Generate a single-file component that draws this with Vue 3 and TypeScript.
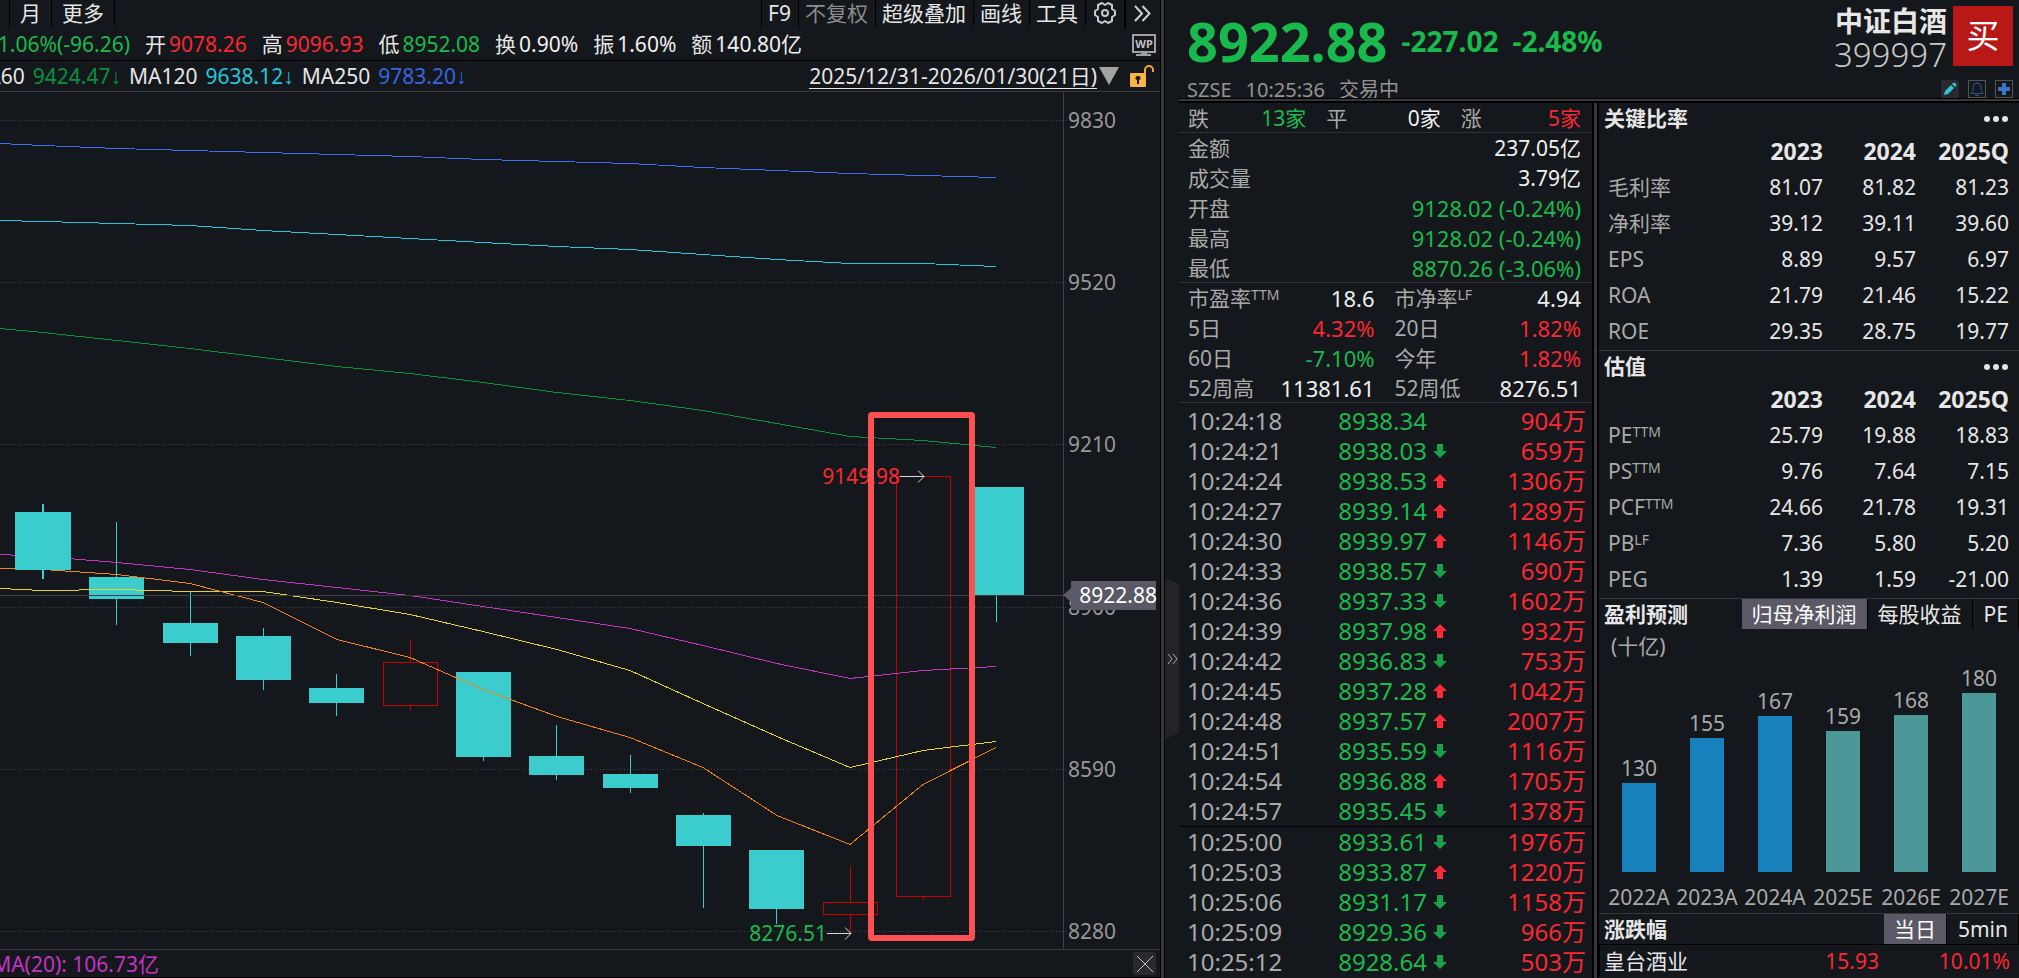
<script setup lang="ts">
import { ref } from 'vue'

type Tone = 'up' | 'down' | 'plain'

interface Quote { label: string; value: string; tone: Tone }
interface Average { name: string; value: string; cls: string }
interface Candle { x: number; open: number; close: number; high: number; low: number; rise?: boolean }
interface Line { cls: string; ys: number[] }
interface Tick { time: string; price: string; dir: '' | 'up' | 'down'; vol: string }
interface Ratio { label: string; sup?: string; values: string[] }

const tools = ['F9', '不复权', '超级叠加', '画线', '工具']

const quotes: Quote[] = [
  { label: '开', value: '9078.26', tone: 'up' },
  { label: '高', value: '9096.93', tone: 'up' },
  { label: '低', value: '8952.08', tone: 'down' },
  { label: '换', value: '0.90%', tone: 'plain' },
  { label: '振', value: '1.60%', tone: 'plain' },
  { label: '额', value: '140.80亿', tone: 'plain' },
]

const averages: Average[] = [
  { name: 'MA60', value: '9424.47↓', cls: 'c60' },
  { name: 'MA120', value: '9638.12↓', cls: 'c120' },
  { name: 'MA250', value: '9783.20↓', cls: 'c250' },
]

const axis = [
  { label: '9830', y: 28 },
  { label: '9520', y: 190 },
  { label: '9210', y: 352 },
  { label: '8900', y: 515 },
  { label: '8590', y: 677 },
  { label: '8280', y: 839 },
]

const candles: Candle[] = [
  { x: 89, open: 485, close: 507, high: 430, low: 533 },
  { x: 163, open: 531, close: 551, high: 500, low: 564 },
  { x: 236, open: 544, close: 588, high: 536, low: 598 },
  { x: 309, open: 596, close: 611, high: 582, low: 624 },
  { x: 383, open: 570, close: 614, high: 547, low: 619, rise: true },
  { x: 456, open: 580, close: 665, high: 580, low: 669 },
  { x: 529, open: 664, close: 683, high: 633, low: 688 },
  { x: 603, open: 682, close: 696, high: 663, low: 701 },
  { x: 676, open: 723, close: 754, high: 721, low: 816 },
  { x: 749, open: 758, close: 817, high: 758, low: 832 },
  { x: 823, open: 810, close: 823, high: 774, low: 841, rise: true },
  { x: 896, open: 384, close: 805, high: 384, low: 808, rise: true },
  { x: 969, open: 395, close: 503, high: 395, low: 530 },
]

const stops = [0, 43, 117, 190, 263, 337, 410, 483, 557, 630, 703, 777, 850, 923, 996]
const lines: Line[] = [
  { cls: 'm250', ys: [51, 53, 56, 58, 60, 62, 64, 67, 69, 71, 75, 78, 81, 83, 85] },
  { cls: 'm120', ys: [128, 129, 131, 133, 138, 142, 146, 150, 154, 157, 162, 167, 171, 171, 174] },
  { cls: 'm60', ys: [236, 240, 248, 256, 265, 274, 281, 290, 300, 308, 318, 331, 344, 348, 355] },
  { cls: 'm20', ys: [462, 464, 470, 477, 487, 495, 503, 514, 525, 536, 553, 571, 586, 578, 574] },
  { cls: 'm10', ys: [496, 498, 497, 499, 499, 510, 522, 539, 557, 578, 611, 644, 675, 658, 649] },
  { cls: 'm5', ys: [476, 477, 482, 491, 510, 547, 565, 597, 624, 645, 675, 723, 752, 692, 655] },
]
const points = (l: Line): string => l.ys.map((y, i) => `${stops[i]},${y + 0.5}`).join(' ')

const turnover: Quote[] = [
  { label: '金额', value: '237.05亿', tone: 'plain' },
  { label: '成交量', value: '3.79亿', tone: 'plain' },
  { label: '开盘', value: '9128.02 (-0.24%)', tone: 'down' },
  { label: '最高', value: '9128.02 (-0.24%)', tone: 'down' },
  { label: '最低', value: '8870.26 (-3.06%)', tone: 'down' },
]

const stats: (Quote & { sup?: string })[] = [
  { label: '市盈率', sup: 'TTM', value: '18.6', tone: 'plain' },
  { label: '市净率', sup: 'LF', value: '4.94', tone: 'plain' },
  { label: '5日', value: '4.32%', tone: 'up' },
  { label: '20日', value: '1.82%', tone: 'up' },
  { label: '60日', value: '-7.10%', tone: 'down' },
  { label: '今年', value: '1.82%', tone: 'up' },
  { label: '52周高', value: '11381.61', tone: 'plain' },
  { label: '52周低', value: '8276.51', tone: 'plain' },
]

const ticks: Tick[] = [
  { time: '10:24:18', price: '8938.34', dir: '', vol: '904万' },
  { time: '10:24:21', price: '8938.03', dir: 'down', vol: '659万' },
  { time: '10:24:24', price: '8938.53', dir: 'up', vol: '1306万' },
  { time: '10:24:27', price: '8939.14', dir: 'up', vol: '1289万' },
  { time: '10:24:30', price: '8939.97', dir: 'up', vol: '1146万' },
  { time: '10:24:33', price: '8938.57', dir: 'down', vol: '690万' },
  { time: '10:24:36', price: '8937.33', dir: 'down', vol: '1602万' },
  { time: '10:24:39', price: '8937.98', dir: 'up', vol: '932万' },
  { time: '10:24:42', price: '8936.83', dir: 'down', vol: '753万' },
  { time: '10:24:45', price: '8937.28', dir: 'up', vol: '1042万' },
  { time: '10:24:48', price: '8937.57', dir: 'up', vol: '2007万' },
  { time: '10:24:51', price: '8935.59', dir: 'down', vol: '1116万' },
  { time: '10:24:54', price: '8936.88', dir: 'up', vol: '1705万' },
  { time: '10:24:57', price: '8935.45', dir: 'down', vol: '1378万' },
  { time: '10:25:00', price: '8933.61', dir: 'down', vol: '1976万' },
  { time: '10:25:03', price: '8933.87', dir: 'up', vol: '1220万' },
  { time: '10:25:06', price: '8931.17', dir: 'down', vol: '1158万' },
  { time: '10:25:09', price: '8929.36', dir: 'down', vol: '966万' },
  { time: '10:25:12', price: '8928.64', dir: 'down', vol: '503万' },
]
const newMinute = (i: number): boolean => i > 0 && ticks[i].time.slice(0, 5) !== ticks[i - 1].time.slice(0, 5)

const ratioBlocks: { title: string; rows: Ratio[] }[] = [
  {
    title: '关键比率',
    rows: [
      { label: '毛利率', values: ['81.07', '81.82', '81.23'] },
      { label: '净利率', values: ['39.12', '39.11', '39.60'] },
      { label: 'EPS', values: ['8.89', '9.57', '6.97'] },
      { label: 'ROA', values: ['21.79', '21.46', '15.22'] },
      { label: 'ROE', values: ['29.35', '28.75', '19.77'] },
    ],
  },
  {
    title: '估值',
    rows: [
      { label: 'PE', sup: 'TTM', values: ['25.79', '19.88', '18.83'] },
      { label: 'PS', sup: 'TTM', values: ['9.76', '7.64', '7.15'] },
      { label: 'PCF', sup: 'TTM', values: ['24.66', '21.78', '19.31'] },
      { label: 'PB', sup: 'LF', values: ['7.36', '5.80', '5.20'] },
      { label: 'PEG', values: ['1.39', '1.59', '-21.00'] },
    ],
  },
]

const forecastTabs = ['归母净利润', '每股收益', 'PE']
const forecastTab = ref('归母净利润')
const moverTabs = ['当日', '5min']
const moverTab = ref('当日')

const forecast = [
  { year: '2022A', value: 130, height: 89 },
  { year: '2023A', value: 155, height: 134 },
  { year: '2024A', value: 167, height: 156 },
  { year: '2025E', value: 159, height: 141 },
  { year: '2026E', value: 168, height: 157 },
  { year: '2027E', value: 180, height: 179 },
]
</script>

<template>
  <div class="app">
    <main class="left">
      <nav class="toolbar">
        <span class="edge"></span>
        <button type="button" class="period">月</button>
        <button type="button" class="more">更多</button>
        <span class="grow"></span>
        <button v-for="t in tools" :key="t" type="button" class="tool" :class="{ dim: t === '不复权' }">{{ t }}</button>
        <button type="button" class="tool icon" aria-label="设置">
          <svg width="22" height="24" viewBox="0 0 22 24" fill="none" stroke="#c8c8c8" stroke-width="2" stroke-linejoin="round">
            <path d="M21 10v4l-3 2v4l-4 2-3-2-3 2-4-2v-4l-3-2v-4l3-2V4l4-2 3 2 3-2 4 2v4z" />
            <circle cx="11" cy="12" r="3" />
          </svg>
        </button>
        <button type="button" class="tool last" aria-label="展开">
          <svg width="17" height="17" viewBox="0 0 17 17" fill="none" stroke="#d0d0d0" stroke-width="2">
            <path d="M1 1l7 7.500-7 7.500M8.500 1l7 7.500-7 7.500" />
          </svg>
        </button>
      </nav>

      <section class="quotes">
        <span class="change down">-1.06%(-96.26)</span>
        <span v-for="q in quotes" :key="q.label" class="quote">
          <span>{{ q.label }}</span><span :class="q.tone">{{ q.value }}</span>
        </span>
        <span class="grow"></span>
        <svg class="wp" width="24" height="24" viewBox="0 0 24 24">
          <path d="M1 1h22v17H1z" fill="none" stroke="#a0a0a0" stroke-width="2" />
          <path d="M9 18h6v2h4v2H4v-2h5z" fill="#a0a0a0" />
          <text x="12" y="14" text-anchor="middle">WP</text>
        </svg>
      </section>

      <section class="averages">
        <span v-for="(a, i) in averages" :key="a.name" class="average" :class="{ first: i === 0 }">
          <span>{{ a.name }}</span><span :class="a.cls">{{ a.value }}</span>
        </span>
        <span class="grow"></span>
        <a href="#" class="range">2025/12/31-2026/01/30(21日)</a>
        <svg class="caret" width="20" height="18" viewBox="0 0 20 18"><path d="M0 0h20L10 18z" fill="#a3a3a3" /></svg>
        <svg class="lock" width="24" height="22" viewBox="0 0 24 22">
          <path d="M15 8V5a4 4 0 0 1 8 0v2" fill="none" stroke="#eea82f" stroke-width="2" />
          <path d="M1 8h14q1 0 1 1v12q0 1-1 1H1q-1 0-1-1V9q0-1 1-1z" fill="#f6b544" />
          <path d="M8 11a2 2 0 0 1 1 4v4H7v-4a2 2 0 0 1 1-4z" fill="#191a1c" />
        </svg>
      </section>

      <section class="chart">
        <svg viewBox="0 0 1160 857" preserveAspectRatio="xMaxYMin meet" role="img" aria-label="日K线">
          <g shape-rendering="crispEdges">
            <line v-for="a in axis" :key="a.label" class="grid" x1="0" x2="1067" :y1="a.y + 0.5" :y2="a.y + 0.5" />
            <line class="rule" x1="1063.500" x2="1063.500" y1="0" y2="857" />
            <g v-for="c in candles" :key="c.x" :class="c.rise ? 'rise' : 'fall'">
              <line :x1="c.x + 27.5" :x2="c.x + 27.5" :y1="c.high" :y2="c.open" />
              <line :x1="c.x + 27.5" :x2="c.x + 27.5" :y1="c.close" :y2="c.low" />
              <rect v-if="c.rise" :x="c.x + 0.5" :y="c.open + 0.5" width="54" :height="c.close - c.open - 1" />
              <rect v-else :x="c.x" :y="c.open" width="55" :height="c.close - c.open" />
            </g>
            <polyline v-for="l in lines" :key="l.cls" class="ma" :class="l.cls" :points="points(l)" />
            <g class="fall">
              <rect x="42" y="412" width="2" height="75" />
              <rect x="15" y="420" width="56" height="58" />
            </g>
            <line class="rule" x1="0" x2="1063" y1="503.500" y2="503.500" />
          </g>
          <text v-for="a in axis" :key="a.label" class="tick" x="1068" :y="a.y + 8">{{ a.label }}</text>
          <path d="M1063 503l8-7v-7h85v29h-85v-8z" fill="#5a5965" />
          <text class="now" x="1157" y="511" text-anchor="end">8922.88</text>
          <text class="high" x="900" y="392" text-anchor="end">9149.98</text>
          <text class="low" x="827" y="849" text-anchor="end">8276.51</text>
          <path class="arrow" d="M900 384.500h24M918 378.500l6 6-6 6M827 841.500h24M845 835.500l6 6-6 6" />
          <rect class="mark" x="871" y="323" width="101" height="523" rx="1" />
        </svg>
      </section>

      <footer class="sub">
        <span class="vol">MA(20): 106.73亿</span>
        <span class="grow"></span>
        <button type="button" class="close" aria-label="关闭">
          <svg width="18" height="18" viewBox="0 0 18 18" stroke="#c4c4c4" stroke-width="1"><path d="M1 1l16 16M17 1L1 17" /></svg>
        </button>
      </footer>
    </main>

    <div class="right">
      <aside class="gutter">
        <button type="button" aria-label="收起">
          <svg width="11" height="12" viewBox="0 0 11 12" fill="none" stroke="#aaa" stroke-width="1"><path d="M1 1l4 5-4 5M6 1l4 5-4 5" /></svg>
        </button>
      </aside>
      <div class="panel">
        <header class="head">
          <div class="price">
            <div class="nums">
              <strong class="last-price">8922.88</strong>
              <strong class="delta">-227.02</strong>
              <strong class="delta">-2.48%</strong>
            </div>
            <div class="session"><span>SZSE</span><span>10:25:36</span><span>交易中</span></div>
          </div>
          <div class="ident">
            <div class="top">
              <div class="names">
                <strong>中证白酒</strong>
                <span>399997</span>
              </div>
              <button type="button" class="buy">买</button>
            </div>
            <div class="actions">
              <button type="button" class="edit" aria-label="编辑">
                <svg width="18" height="18" viewBox="0 0 18 18" fill="#2fc5d3"><path d="M3 15l1-4 6-6 3 3-6 6zM11 4l1-1q1-1 2 0l1 1q1 1 0 2l-1 1z" /></svg>
              </button>
              <button type="button" aria-label="提醒">
                <svg width="14" height="14" viewBox="0 0 14 14" fill="none" stroke="#2e5594"><path d="M1 11.500h12l-2-3V5a4 4 0 0 0-8 0v3.500zM5 13.500h4M7 1V0" /></svg>
              </button>
              <button type="button" aria-label="添加">
                <svg width="14" height="14" viewBox="0 0 14 14" fill="#3c74c8"><path d="M5 1h4v4h4v4H9v4H5V9H1V5h4z" /></svg>
              </button>
            </div>
          </div>
        </header>

        <div class="body">
          <section class="mid">
            <div class="breadth">
              <div><span>跌</span><span class="down">13家</span></div>
              <div><span>平</span><span class="plain">0家</span></div>
              <div><span>涨</span><span class="up">5家</span></div>
            </div>
            <dl class="turnover">
              <div v-for="t in turnover" :key="t.label"><dt>{{ t.label }}</dt><dd :class="t.tone">{{ t.value }}</dd></div>
            </dl>
            <dl class="stats">
              <div v-for="s in stats" :key="s.label">
                <dt>{{ s.label }}<sup v-if="s.sup">{{ s.sup }}</sup></dt><dd :class="s.tone">{{ s.value }}</dd>
              </div>
            </dl>
            <table class="ticks">
              <tbody>
                <tr v-for="(t, i) in ticks" :key="t.time" :class="{ minute: newMinute(i) }">
                  <td class="time">{{ t.time }}</td>
                  <td class="deal down">{{ t.price }}</td>
                  <td class="dir">
                    <svg v-if="t.dir" width="14" height="14" viewBox="0 0 14 14">
                      <path v-if="t.dir === 'up'" d="M7 0l7 7H10v7H4V7H0z" fill="#ff2a36" />
                      <path v-else d="M7 14L0 7h4V0h6v7h4z" fill="#18a04a" />
                    </svg>
                  </td>
                  <td class="amount up">{{ t.vol }}</td>
                </tr>
              </tbody>
            </table>
          </section>

          <section class="side">
            <div v-for="b in ratioBlocks" :key="b.title" class="block">
              <div class="title">
                <h2>{{ b.title }}</h2>
                <button type="button" class="dots" aria-label="更多"><i></i><i></i><i></i></button>
              </div>
              <table class="ratios">
                <thead>
                  <tr><th></th><th>2023</th><th>2024</th><th>2025Q</th></tr>
                </thead>
                <tbody>
                  <tr v-for="r in b.rows" :key="r.label">
                    <td>{{ r.label }}<sup v-if="r.sup">{{ r.sup }}</sup></td>
                    <td v-for="v in r.values" :key="v">{{ v }}</td>
                  </tr>
                </tbody>
              </table>
            </div>

            <div class="forecast">
              <div class="title tabs">
                <h2>盈利预测</h2>
                <button v-for="t in forecastTabs" :key="t" type="button" :class="{ on: t === forecastTab }" @click="forecastTab = t">{{ t }}</button>
              </div>
              <div class="unit">(十亿)</div>
              <div class="bars">
                <div v-for="f in forecast" :key="f.year" class="bar">
                  <span>{{ f.value }}</span>
                  <i :class="{ est: f.year.endsWith('E') }" :style="{ height: f.height + 'px' }"></i>
                  <span class="year">{{ f.year }}</span>
                </div>
              </div>
            </div>

            <div class="movers">
              <div class="title tabs">
                <h2>涨跌幅</h2>
                <button v-for="t in moverTabs" :key="t" type="button" :class="{ on: t === moverTab }" @click="moverTab = t">{{ t }}</button>
              </div>
              <div class="mover"><span>皇台酒业</span><span class="up">15.93</span><span class="up">10.01%</span></div>
            </div>
          </section>
        </div>
      </div>
    </div>
  </div>
</template>

<style>
body {
  margin: 0;
  background: #14171b;
}
</style>

<style scoped>
.app {
  display: grid;
  grid-template-columns: 1165fr 854fr;
  height: 100vh;
  overflow: hidden;
  background: #14171b;
  color: #e6e6e6;
  font-family: "Noto Sans", "Noto Sans CJK SC", sans-serif;
  font-size: 21px;
  line-height: 30px;
  white-space: nowrap;
}
button {
  margin: 0;
  padding: 0;
  border: 0;
  background: none;
  color: inherit;
  font: inherit;
  white-space: nowrap;
  cursor: pointer;
}
svg {
  display: block;
  flex: none;
}
h2, dl, dd {
  margin: 0;
}
table {
  width: 100%;
  border-collapse: collapse;
  table-layout: fixed;
}
th, td {
  padding: 0;
}
.grow {
  flex: 1;
}
.up { color: #fa2832; }
.down { color: #18ba4d; }
.plain { color: #f0f0f0; }

/* left: price chart */
.left {
  display: flex;
  flex-direction: column;
  min-width: 0;
  height: 100vh;
  overflow: hidden;
  box-sizing: border-box;
  border-right: 1px solid #000;
  box-shadow: inset -3px 0 #37363b, inset -4px 0 #000;
  padding-right: 4px;
}
.toolbar {
  display: flex;
  height: 28px;
}
.edge {
  width: 9px;
}
.toolbar button {
  display: flex;
  align-items: center;
  justify-content: center;
  box-sizing: border-box;
  padding-bottom: 2px;
  border-left: 1px solid #000;
}
.toolbar .period {
  width: 42px;
}
.toolbar .more {
  width: 64px;
  border-right: 1px solid #000;
}
.toolbar .tool {
  padding: 0 7px 2px 6px;
}
.toolbar .dim {
  color: #8c8c8c;
}
.toolbar .icon {
  width: 39px;
}
.toolbar .last {
  width: 36px;
  border-left-width: 2px;
}
.quotes, .averages {
  display: flex;
  align-items: center;
  height: 32px;
}
.quotes {
  gap: 15px;
  border-bottom: 1px solid #000;
}
.change {
  display: flex;
  justify-content: flex-end;
  width: 130px;
}
.quote {
  display: flex;
  gap: 3px;
}
.wp {
  margin: 3px 4px 0 0;
}
.wp text {
  fill: #c0c0c0;
  font-size: 11px;
  font-weight: 700;
}
.averages {
  height: 30px;
  border-bottom: 1px solid #3a3a3e;
}
.average {
  display: flex;
  gap: 8px;
  margin-right: 8px;
}
.average.first {
  justify-content: flex-end;
  width: 121px;
}
/* Liberation Sans supplies a half-width trend arrow */
.c60, .c120, .c250 { font-family: "Noto Sans", "Liberation Sans", sans-serif; }
.c60 { color: #04923f; }
.c120 { color: #20c8da; }
.c250 { color: #3566e0; }
.range {
  color: #e6e6e6;
  line-height: 24px;
  text-decoration: none;
  border-bottom: 1px solid #e6e6e6;
}
.caret {
  margin: 0 11px 0 2px;
}
.lock {
  margin-right: 6px;
}
.chart {
  flex: 1;
  min-height: 0;
}
.chart svg {
  width: 100%;
  height: 100%;
}
.grid {
  stroke: #44454a;
  stroke-dasharray: 1 2;
}
.rule { stroke: #3e3e42; }
.ma { fill: none; stroke-width: 1; }
.m250 { stroke: #3c6cf0; }
.m120 { stroke: #20c8da; }
.m60 { stroke: #04923f; }
.m20 { stroke: #c334c3; }
.m10 { stroke: #e8d22c; }
.m5 { stroke: #f5820f; }
.fall { fill: #3bcccd; stroke: none; }
.fall line { stroke: #3bcccd; }
.rise { fill: none; stroke: #c80000; }
.chart text { font-size: 21px; }
.tick { fill: #979797; }
.now { fill: #fff; }
.high { fill: #fa2832; }
.low { fill: #18ba4d; }
.arrow { fill: none; stroke: #d8d8d8; }
.mark { fill: none; stroke: #fb5150; stroke-width: 6; }
.sub {
  display: flex;
  align-items: center;
  height: 27px;
  border-top: 1px solid #3a3a3e;
  border-bottom: 1px solid #000;
}
.vol {
  display: flex;
  justify-content: flex-end;
  width: 159px;
  color: #c334c3;
}
.close {
  display: flex;
  align-items: center;
  justify-content: center;
  width: 23px;
  height: 23px;
  margin-right: 4px;
  border-radius: 2px;
  background: #29292e;
}

/* right: quote panel */
.right {
  display: flex;
  min-width: 0;
  height: 100vh;
  overflow: hidden;
}
.gutter {
  display: flex;
  align-items: center;
  width: 14px;
  padding-top: 339px;
  box-sizing: border-box;
}
.gutter button {
  display: flex;
  align-items: center;
  justify-content: center;
  width: 14px;
  height: 161px;
  background: #25232a;
  clip-path: polygon(0 0, 100% 6px, 100% 155px, 0 100%);
}
.panel {
  flex: 1;
  min-width: 0;
}
.head {
  display: flex;
  justify-content: space-between;
  box-sizing: border-box;
  height: 99px;
  overflow: hidden;
  border-bottom: 1px solid #000;
}
.price {
  padding: 7px 0 0 8px;
}
.nums {
  display: flex;
  align-items: center;
  height: 68px;
  color: #18ba4d;
}
.last-price {
  font-size: 54px;
  line-height: 66px;
}
.delta {
  margin-left: 14px;
  font-size: 28px;
}
.session {
  display: flex;
  gap: 14px;
  color: #949494;
  font-size: 20px;
}
.ident {
  padding: 6px 6px 0 0;
}
.top {
  display: flex;
  gap: 6px;
}
.names {
  display: flex;
  flex-direction: column;
  align-items: flex-end;
  height: 60px;
  font-size: 28px;
  line-height: 30px;
}
.names span {
  color: #c8c8c8;
  font-size: 33px;
  font-weight: 300;
  line-height: 38px;
}
.buy {
  flex: none;
  width: 60px;
  height: 60px;
  background: #b91818;
  color: #fff;
  font-size: 33px;
}
.actions {
  display: flex;
  justify-content: flex-end;
  gap: 9px;
  height: 18px;
  margin-top: 14px;
}
.actions button {
  display: flex;
  align-items: center;
  justify-content: center;
  width: 18px;
  height: 18px;
  box-sizing: border-box;
  border: 1px solid #55534f;
}
.actions .edit {
  border: 0;
  border-radius: 2px;
  background: #2a2a30;
}
.body {
  display: grid;
  grid-template-columns: 1fr 1fr;
  height: calc(100vh - 103px);
  padding-top: 2px;
  border-top: 2px solid #37363b;
  box-shadow: inset 0 2px #000;
}
.mid {
  min-width: 0;
  padding-right: 7px;
  box-shadow: inset -2px 0 #000, inset -5px 0 #37363b, inset -7px 0 #000;
  color: #a9a9a9;
  overflow: hidden;
}
.breadth {
  display: grid;
  grid-template-columns: 119fr 115fr 121fr;
  column-gap: 20px;
  height: 29px;
  padding: 0 11px 0 9px;
  line-height: 31px;
  border-bottom: 1px solid #313135;
}
.breadth div, .turnover div, .stats div {
  display: flex;
  justify-content: space-between;
}
.turnover, .stats {
  padding: 0 11px 0 9px;
  border-bottom: 1px solid #313135;
}
.turnover div, .stats div {
  height: 30px;
}
.turnover {
  height: 149px;
}
.turnover .down, .stats dd {
  font-size: 22px;
}
.stats {
  display: grid;
  grid-template-columns: 1fr 1fr;
  column-gap: 20px;
  height: 119px;
}
sup {
  color: #a9a9a9;
  font-size: 14px;
  line-height: 0;
  vertical-align: 6px;
}
.ticks {
  margin-top: 3px;
  font-size: 24px;
}
.ticks tr {
  height: 30px;
}
.ticks td {
  height: 30px;
  line-height: 28px;
}
.ticks .minute td {
  border-top: 1px solid #000;
}
.ticks .time {
  width: 100px;
  padding-left: 8px;
}
.ticks .deal {
  width: 140px;
  text-align: right;
}
.ticks .dir {
  width: 14px;
  padding: 0 6px;
}
.ticks .amount {
  padding-right: 6px;
  text-align: right;
}
.side {
  display: flex;
  flex-direction: column;
  min-width: 0;
}
.block, .forecast {
  border-bottom: 1px solid #37363b;
}
.block {
  padding-bottom: 1px;
}
.title {
  display: flex;
  align-items: center;
  height: 30px;
  padding-left: 5px;
}
h2 {
  flex: 1;
  font-size: 21px;
  line-height: 30px;
}
.dots {
  display: flex;
  gap: 3px;
  margin-right: 11px;
  padding: 9px 0 7px;
}
.dots i {
  width: 6px;
  height: 6px;
  border-radius: 50%;
  background: #e6e6e6;
}
.ratios tr {
  height: 36px;
}
.ratios th, .ratios td {
  width: 93px;
  text-align: right;
}
.ratios th {
  font-size: 23px;
}
.ratios th:last-child, .ratios td:last-child {
  padding-right: 10px;
}
.ratios th:first-child, .ratios td:first-child {
  width: auto;
  padding-left: 9px;
  color: #a9a9a9;
  text-align: left;
}
.tabs button {
  height: 30px;
  padding: 0 10px;
  border-right: 1px solid #000;
}
.tabs button:last-child {
  padding: 0 10px 0 11px;
}
.tabs .on {
  background: #5a5965;
  color: #fff;
}
.unit {
  padding-left: 12px;
  color: #a9a9a9;
  line-height: 34px;
}
.bars {
  display: grid;
  grid-template-columns: repeat(6, 1fr);
  align-items: end;
  box-sizing: border-box;
  height: 250px;
  padding: 0 6px 3px;
}
.bar {
  display: flex;
  flex-direction: column;
  align-items: center;
  color: #a9a9a9;
}
.bar i {
  width: 34px;
  margin-bottom: 10px;
  background: #1781bd;
}
.bar .est {
  background: #4c9899;
}
.bar .year {
  margin-bottom: 9px;
}
.movers .tabs {
  border-bottom: 1px solid #000;
}
.mover {
  display: grid;
  grid-template-columns: 1fr 131px 131px;
  padding: 1px 9px 0 4px;
  text-align: right;
  border-left: 1px solid #000;
}
.mover span:first-child {
  text-align: left;
}
</style>
